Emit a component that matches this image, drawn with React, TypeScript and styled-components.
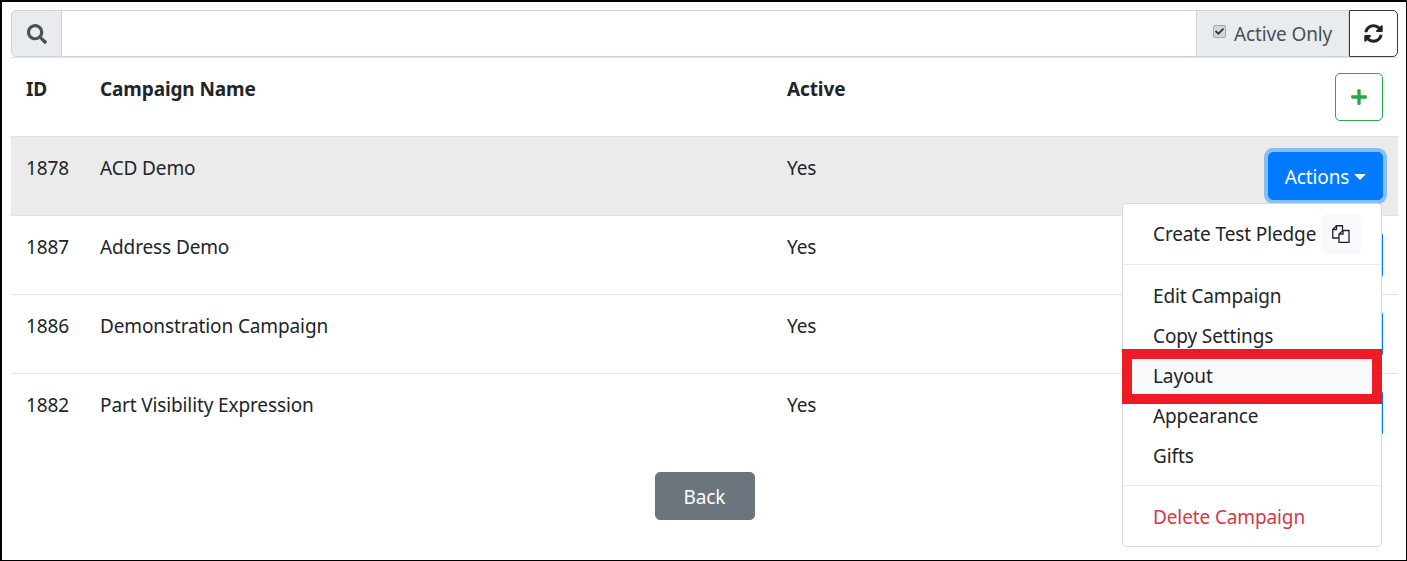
import React from "react";
import styled, { createGlobalStyle } from "styled-components";
import { FaCheck, FaPlus, FaSearch, FaSyncAlt } from "react-icons/fa";

const GlobalStyle = createGlobalStyle`
  html, body {
    margin: 0;
    padding: 0;
    background: #fff;
  }

  body {
    font-family: "Noto Sans", "Open Sans", sans-serif;
    font-size: 19px;
    letter-spacing: -0.12px;
    line-height: 30px;
    color: #212529;
  }
`;

const Page = styled.div`
  position: relative;
  box-sizing: border-box;
  width: 1407px;
  height: 561px;
  padding: 8px 8px 0 9px;
  border: 2px solid #000;
  border-width: 2px 1px 1px 2px;
  overflow: hidden;
`;

const SearchBar = styled.div`
  display: flex;
  height: 47px;
`;

const SearchAddon = styled.div`
  box-sizing: border-box;
  display: flex;
  align-items: center;
  justify-content: center;
  width: 51px;
  background: #e9ecef;
  color: #495057;
  border: 1px solid #ced4da;
  border-radius: 5px 0 0 5px;
  font-size: 20px;
`;

const SearchInput = styled.input`
  box-sizing: border-box;
  flex: 1;
  min-width: 0;
  border: 1px solid #ced4da;
  border-left: 0;
  border-right: 0;
  outline: none;
  background: #fff;
`;

const ActiveOnly = styled.label`
  box-sizing: border-box;
  display: flex;
  align-items: center;
  gap: 8px;
  width: 153px;
  padding-left: 16px;
  background: #e9ecef;
  color: #495057;
  border: 1px solid #ced4da;
`;

const ActiveCheck = styled.span`
  box-sizing: border-box;
  display: flex;
  align-items: center;
  justify-content: center;
  width: 13px;
  height: 13px;
  margin-bottom: 4px;
  background: #d6d6d6;
  color: #333;
  border: 1px solid #a8a8a8;
  border-radius: 2px;
  font-size: 9px;
`;

const RefreshButton = styled.button`
  box-sizing: border-box;
  display: flex;
  align-items: center;
  justify-content: center;
  width: 49px;
  padding: 0;
  background: #fff;
  color: #212529;
  border: 1px solid #343a40;
  border-radius: 0 5px 5px 0;
  font-size: 19px;
`;

const Row = styled.div<{ $selected?: boolean }>`
  display: grid;
  grid-template-columns: 74px 687px 1fr auto;
  box-sizing: border-box;
  height: 79px;
  padding: 15px;
  border-top: 1px solid #dee2e6;
  background: ${(p) => (p.$selected ? "#ebebeb" : "transparent")};
`;

const HeadRow = styled(Row)`
  font-weight: 700;
`;

const Cell = styled.div`
  margin-top: 1px;
`;

const AddButton = styled.button`
  box-sizing: border-box;
  display: flex;
  align-items: center;
  justify-content: center;
  width: 48px;
  height: 48px;
  padding: 0;
  background: #fff;
  color: #28a745;
  border: 1px solid #28a745;
  border-radius: 5px;
  font-size: 18px;
`;

const ActionsButton = styled.button<{ $open?: boolean }>`
  box-sizing: border-box;
  display: flex;
  align-items: center;
  justify-content: center;
  width: 115px;
  height: 48px;
  padding: 2px 0 0;
  font: inherit;
  letter-spacing: inherit;
  color: #fff;
  background: #007bff;
  border: 1px solid #007bff;
  border-radius: 5px;
  box-shadow: ${(p) => (p.$open ? "0 0 0 4px rgba(38, 143, 255, 0.5)" : "none")};

  &::after {
    content: "";
    margin-left: 5px;
    border-top: 6px solid #fff;
    border-left: 6px solid transparent;
    border-right: 6px solid transparent;
  }
`;

const BackWrap = styled.div`
  display: flex;
  justify-content: center;
  padding: 20px 0;
`;

const BackButton = styled.button`
  box-sizing: border-box;
  width: 100px;
  height: 48px;
  padding: 2px 0 0;
  font: inherit;
  letter-spacing: inherit;
  color: #fff;
  background: #6c757d;
  border: 1px solid #6c757d;
  border-radius: 5px;
`;

const Menu = styled.div`
  position: absolute;
  top: 201px;
  left: 1120px;
  box-sizing: border-box;
  width: 260px;
  padding: 10px 0;
  background: #fff;
  border: 1px solid rgba(0, 0, 0, 0.15);
  border-radius: 5px;
  z-index: 2;
`;

const MenuHeader = styled.div`
  display: flex;
  align-items: center;
  gap: 5px;
  height: 40px;
  padding-left: 30px;
`;

const CopyButton = styled.span`
  display: flex;
  align-items: center;
  justify-content: center;
  width: 40px;
  height: 40px;
  background: #f8f9fa;
  border-radius: 5px;
`;

const MenuItem = styled.div<{ $danger?: boolean; $active?: boolean }>`
  position: relative;
  height: 40px;
  padding: 6px 0 4px 30px;
  box-sizing: border-box;
  color: ${(p) => (p.$danger ? "#dc3545" : "#212529")};
  background: ${(p) => (p.$active ? "#f8f9fa" : "transparent")};
`;

const Highlight = styled.span`
  position: absolute;
  top: -6px;
  bottom: -9px;
  left: -1px;
  right: -1px;
  border: 10px solid #ed1c24;
  pointer-events: none;
`;

const Divider = styled.div`
  height: 1px;
  margin: 10px 0;
  background: #e9ecef;
`;

const campaigns = [
  { id: 1878, name: "ACD Demo" },
  { id: 1887, name: "Address Demo" },
  { id: 1886, name: "Demonstration Campaign" },
  { id: 1882, name: "Part Visibility Expression" },
];

const CopyIcon = () => (
  <svg width="18" height="18" viewBox="0 0 18 18" fill="none" stroke="#212529" strokeWidth="1.3">
    <path d="M7 13H.75V4.500L4.500.75h6V5" />
    <path d="M4.500.75V4.500H.75" />
    <path d="M11 5.500h6v12H7V9z" />
    <path d="M11 5.500V9H7" />
  </svg>
);

export default function App() {
  return (
    <Page>
      <GlobalStyle />
      <SearchBar>
        <SearchAddon>
          <FaSearch />
        </SearchAddon>
        <SearchInput />
        <ActiveOnly>
          <ActiveCheck>
            <FaCheck />
          </ActiveCheck>
          Active Only
        </ActiveOnly>
        <RefreshButton>
          <FaSyncAlt />
        </RefreshButton>
      </SearchBar>
      <HeadRow>
        <Cell>ID</Cell>
        <Cell>Campaign Name</Cell>
        <Cell>Active</Cell>
        <AddButton>
          <FaPlus />
        </AddButton>
      </HeadRow>
      {campaigns.map((c, i) => (
        <Row key={c.id} $selected={i === 0}>
          <Cell>{c.id}</Cell>
          <Cell>{c.name}</Cell>
          <Cell>Yes</Cell>
          <ActionsButton $open={i === 0}>Actions</ActionsButton>
        </Row>
      ))}
      <BackWrap>
        <BackButton>Back</BackButton>
      </BackWrap>
      <Menu>
        <MenuHeader>
          Create Test Pledge
          <CopyButton>
            <CopyIcon />
          </CopyButton>
        </MenuHeader>
        <Divider />
        <MenuItem>Edit Campaign</MenuItem>
        <MenuItem>Copy Settings</MenuItem>
        <MenuItem $active>
          Layout
          <Highlight />
        </MenuItem>
        <MenuItem>Appearance</MenuItem>
        <MenuItem>Gifts</MenuItem>
        <Divider />
        <MenuItem $danger>Delete Campaign</MenuItem>
      </Menu>
    </Page>
  );
}
